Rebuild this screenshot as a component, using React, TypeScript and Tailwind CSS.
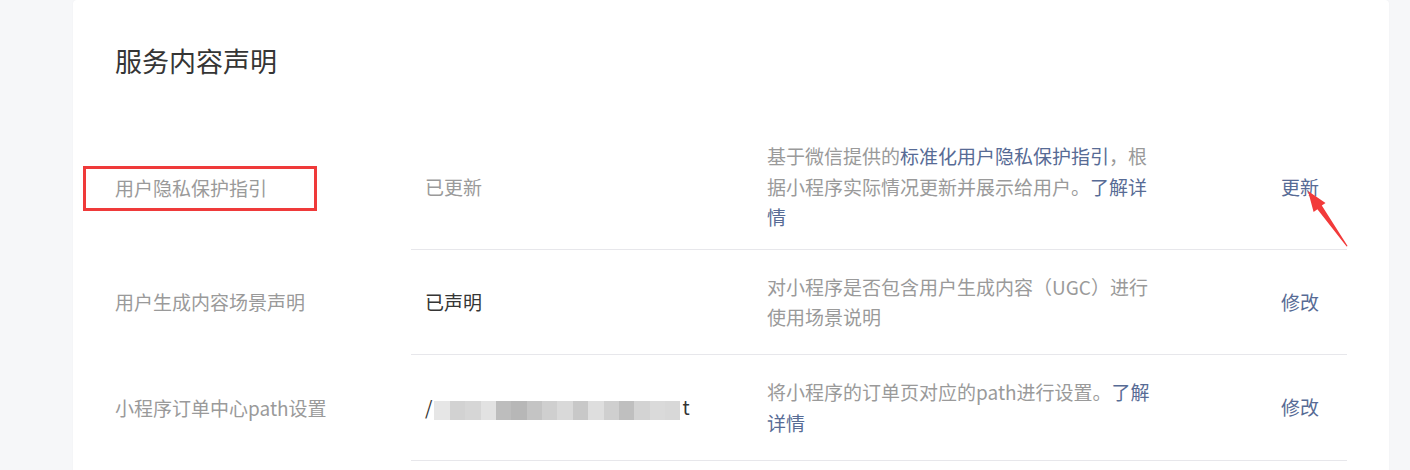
import React from "react";

const font = { fontFamily: '"Noto Sans CJK SC", "Noto Sans", sans-serif' };

function Blur() {
  const blocks = [
    "#e6e6e6", "#d2d2d2", "#d6d6d6", "#e2e2e2", "#bdbdbd", "#b7b7b7", "#c4c4c4", "#cfcfcf",
    "#d9d9d9", "#c8c8c8", "#dedede", "#cfcfcf", "#bfbfbf", "#d3d3d3", "#dadada", "#d8d8d8",
  ];
  return (
    <span className="inline-flex h-[19px] w-[246px] items-stretch align-middle">
      {blocks.map((c, i) => (
        <span key={i} className="flex-1" style={{ background: c }} />
      ))}
    </span>
  );
}

export default function App() {
  return (
    <div
      className="h-[470px] w-[1410px] overflow-hidden bg-[#f6f7f9] pl-[73px] pr-[21px]"
      style={font}
    >
      <div className="relative min-h-[520px] rounded-[4px] bg-white pl-[42px] pr-[42px] pt-[42px] shadow-[0_0_2px_rgba(0,0,0,0.04)]">
        <h2 className="h-[40px] text-[27px] leading-[38px] text-[#353535]">服务内容声明</h2>
        <div className="mt-[43px]">
          {/* Row 1 */}
          <div className="flex h-[125px] items-stretch">
            <div className="flex w-[296px] items-center text-[19px] text-[#9a9a9a]">
              <span className="relative leading-[20px]">
                用户隐私保护指引
                <span className="absolute left-[-32px] right-[-50px] top-[-12px] bottom-[-13px] border-[3px] border-[#ef3a3a]" />
              </span>
            </div>
            <div className="flex flex-1 items-center border-b border-[#e7e7eb]">
              <div className="w-[356px] pl-[14px] text-[19px] text-[#9a9a9a]">已更新</div>
              <div className="w-[392px] text-[19px] leading-[30.5px] text-[#9a9a9a]">
                基于微信提供的<span className="text-[#576b95]">标准化用户隐私保护指引</span>，根据小程序实际情况更新并展示给用户。
                <span className="text-[#576b95]">了解详情</span>
              </div>
              <div className="pl-[122px] text-[19px] text-[#576b95]">更新</div>
            </div>
          </div>
          {/* Row 2 */}
          <div className="flex h-[105px] items-stretch">
            <div className="flex w-[296px] items-center text-[19px] text-[#9a9a9a]">用户生成内容场景声明</div>
            <div className="flex flex-1 items-center border-b border-[#e7e7eb]">
              <div className="w-[356px] pl-[14px] text-[19px] text-[#353535]">已声明</div>
              <div className="w-[392px] text-[19px] leading-[30.5px] text-[#9a9a9a]">
                对小程序是否包含用户生成内容（UGC）进行使用场景说明
              </div>
              <div className="pl-[122px] text-[19px] text-[#576b95]">修改</div>
            </div>
          </div>
          {/* Row 3 */}
          <div className="flex h-[106px] items-stretch">
            <div className="flex w-[296px] items-center text-[19px] text-[#9a9a9a]">小程序订单中心path设置</div>
            <div className="flex flex-1 items-center border-b border-[#e7e7eb]">
              <div className="flex w-[356px] items-center pl-[14px] text-[19px] text-[#353535]">
                <span>/</span>
                <span className="ml-[2px]"><Blur /></span>
                <span className="ml-[2px]">t</span>
              </div>
              <div className="w-[392px] text-[19px] leading-[30.5px] text-[#9a9a9a]">
                将小程序的订单页对应的path进行设置。<span className="text-[#576b95]">了解详情</span>
              </div>
              <div className="pl-[122px] text-[19px] text-[#576b95]">修改</div>
            </div>
          </div>
        </div>
        <svg className="pointer-events-none absolute left-0 top-0" width="1316" height="470" viewBox="73 0 1316 470">
          <polygon
            points="1308,191 1325.5,203 1321.8,205.6 1347.6,246 1346.6,246.4 1317.4,209.2 1313.6,212"
            fill="#f23a3a"
          />
        </svg>
      </div>
    </div>
  );
}
